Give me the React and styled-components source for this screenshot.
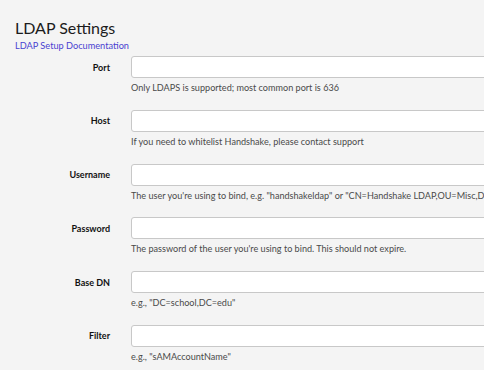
import React from "react";
import styled, { createGlobalStyle } from "styled-components";

const Global = createGlobalStyle`
  html, body { margin: 0; padding: 0; overflow: hidden; background: #f4f4f4; }
  body { font-family: Lato, "Noto Sans", sans-serif; color: #222; }
`;

const Page = styled.div`
  padding: 17px 0 0 15px;
  width: 700px;
`;

const Title = styled.h1`
  margin: 0;
  font-size: 16px;
  line-height: 22px;
  font-weight: 400;
  color: #1c1c1c;
`;

const DocLink = styled.a`
  display: block;
  margin-top: 0;
  font-size: 9.2px;
  line-height: 13px;
  color: #4a3fd1;
  text-decoration: none;
`;

const Form = styled.div`
  display: flex;
  flex-direction: column;
  gap: 15.8px;
  margin-top: 4px;
`;

const Row = styled.div`
  display: grid;
  grid-template-columns: 95px 400px;
  column-gap: 21px;
  align-items: start;
`;

const Label = styled.label`
  height: 22px;
  display: flex;
  align-items: center;
  justify-content: flex-end;
  font-size: 9px;
  font-weight: 700;
  color: #111;
`;

const Field = styled.div`
  display: flex;
  flex-direction: column;
`;

const Input = styled.input`
  box-sizing: border-box;
  height: 22px;
  width: 100%;
  margin: 0;
  border: 1px solid #c8c8c8;
  border-radius: 3px;
  background: #fff;
  outline: none;
`;

const Help = styled.div`
  margin-top: 4px;
  font-size: 9.1px;
  line-height: 12px;
  color: #4a4a4a;
  white-space: nowrap;
`;

const fields = [
  ["Port", "Only LDAPS is supported; most common port is 636"],
  ["Host", "If you need to whitelist Handshake, please contact support"],
  ["Username", "The user you're using to bind, e.g. \"handshakeldap\" or \"CN=Handshake LDAP,OU=Misc,DC=school,DC=edu\""],
  ["Password", "The password of the user you're using to bind. This should not expire."],
  ["Base DN", "e.g., \"DC=school,DC=edu\""],
  ["Filter", "e.g., \"sAMAccountName\""],
];

export default function App() {
  return (
    <>
      <Global />
      <Page>
        <Title>LDAP Settings</Title>
        <DocLink href="#">LDAP Setup Documentation</DocLink>
        <Form>
          {fields.map(([label, help]) => (
            <Row key={label}>
              <Label>{label}</Label>
              <Field>
                <Input type={label === "Password" ? "password" : "text"} />
                <Help>{help}</Help>
              </Field>
            </Row>
          ))}
        </Form>
      </Page>
    </>
  );
}
